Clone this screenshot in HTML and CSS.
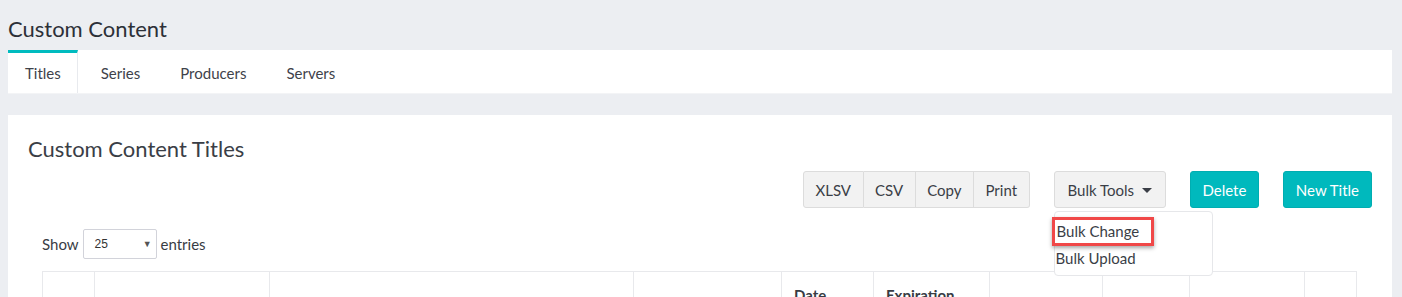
FILE: index.html
```html
<!DOCTYPE html>
<html>
  <head>
    <meta charset="utf-8">
    <title>Custom Content</title>
    <link rel="stylesheet" href="styles.css">
  </head>
  <body>
    <div class="page">
      <h1 class="page-title">Custom Content</h1>
      <nav class="tabs">
        <a class="tab active">Titles</a>
        <a class="tab">Series</a>
        <a class="tab">Producers</a>
        <a class="tab">Servers</a>
      </nav>
      <div class="tabs-gap"></div>
      <section class="card">
        <h2 class="card-title">Custom Content Titles</h2>
        <div class="toolbar">
          <div class="btn-group">
            <button type="button" class="btn">XLSV</button>
            <button type="button" class="btn">CSV</button>
            <button type="button" class="btn">Copy</button>
            <button type="button" class="btn">Print</button>
          </div>
          <div class="dropdown">
            <button type="button" class="btn btn-single">Bulk Tools <span class="caret"></span></button>
            <ul class="dropdown-menu">
              <li class="dropdown-item"><span class="highlight">Bulk Change</span></li>
              <li class="dropdown-item">Bulk Upload</li>
            </ul>
          </div>
          <button type="button" class="btn btn-teal btn-delete">Delete</button>
          <button type="button" class="btn btn-teal">New Title</button>
        </div>
        <div class="table-wrap">
          <div class="length">
            Show
            <div class="select"><span>25</span><span class="arrow">&#9660;</span></div>
            entries
          </div>
          <table class="grid">
            <colgroup>
              <col style="width:52px">
              <col style="width:175px">
              <col style="width:364px">
              <col style="width:148px">
              <col style="width:92px">
              <col style="width:116px">
              <col style="width:113px">
              <col style="width:87px">
              <col style="width:115px">
              <col style="width:52px">
            </colgroup>
            <thead>
              <tr>
                <th></th>
                <th></th>
                <th></th>
                <th></th>
                <th>Date Added</th>
                <th>Expiration Date</th>
                <th></th>
                <th></th>
                <th></th>
                <th></th>
              </tr>
            </thead>
          </table>
        </div>
      </section>
    </div>
  </body>
</html>
```

FILE: styles.css
```css
* {
  margin: 0;
  padding: 0;
  box-sizing: border-box;
}

body {
  background-color: #eceef2;
  color: #383c44;
  font-family: Lato, "Liberation Sans", sans-serif;
  overflow: hidden;
}

.page {
  padding: 0 10px 0 8px;
}

.page-title {
  font-size: 22px;
  font-weight: 400;
  line-height: 50px;
  height: 50px;
  padding-top: 4px;
  color: #2c3038;
}

.tabs {
  background-color: white;
  display: flex;
  height: 44px;
  border-bottom: 1px solid #f3f4f6;
}

.tab {
  font-size: 15px;
  line-height: 41px;
  padding: 0 17px 0 17px;
  margin-right: 6px;
  color: #3e424a;
  border-top: 3px solid transparent;
}

.tab.active {
  border-top-color: #00bbbf;
  border-right: 1px solid #e8eaee;
  padding-right: 16px;
}

.tabs-gap {
  height: 21px;
}

.card {
  background-color: white;
  height: 200px;
  padding: 18px 20px 0 20px;
}

.card-title {
  font-size: 22px;
  font-weight: 400;
  line-height: 32px;
  color: #3a3e46;
}

.toolbar {
  display: flex;
  justify-content: flex-end;
  gap: 24px;
  margin-top: 6px;
  height: 37px;
}

.btn-group {
  display: flex;
}

.btn {
  font-family: inherit;
  font-size: 15px;
  height: 37px;
  padding: 0 11.5px;
  background-color: #f2f2f2;
  border: 1px solid #dcdcdc;
  color: #3a3e46;
}

.btn-group .btn {
  border-radius: 0;
  border-left-width: 0;
}

.btn-group .btn:first-child {
  border-left-width: 1px;
  border-radius: 3px 0 0 3px;
}

.btn-group .btn:last-child {
  border-radius: 0 3px 3px 0;
}

.btn-single {
  border-radius: 3px;
  padding: 0 13px;
}

.caret {
  display: inline-block;
  width: 0;
  height: 0;
  margin-left: 4px;
  vertical-align: 3px;
  border-left: 5px solid transparent;
  border-right: 5px solid transparent;
  border-top: 5px solid #3a3e46;
}

.btn-teal {
  background-color: #00b9bd;
  border-color: #00adb1;
  color: white;
  border-radius: 3px;
  padding: 0 12px;
}

.btn-teal.btn-delete {
  padding: 0 11.5px;
}

.dropdown {
  position: relative;
}

.dropdown-menu {
  position: absolute;
  top: 40px;
  left: 0;
  width: 159px;
  height: 65px;
  background-color: white;
  border: 1px solid #e6e7ea;
  border-radius: 4px;
  list-style-type: none;
  padding-top: 5px;
  z-index: 2;
}

.dropdown-item {
  font-size: 15px;
  line-height: 24px;
  padding-left: 1px;
  color: #3a3e46;
}

.highlight {
  display: inline-block;
  margin-left: -4px;
  padding: 1px 12px 1px 2px;
  line-height: 21px;
  border: 3px solid #f04848;
  box-shadow: 0 2px 4px rgba(0, 0, 0, 0.35);
}

.table-wrap {
  padding: 0 15px 0 14px;
  margin-top: 21px;
}

.length {
  display: flex;
  align-items: center;
  font-size: 15px;
  height: 30px;
  gap: 4px;
}

.select {
  width: 74px;
  height: 30px;
  border: 1px solid #d2d3da;
  border-radius: 2px;
  display: flex;
  align-items: center;
  justify-content: space-between;
  padding: 0 4px 0 11px;
  font-size: 12px;
  font-family: "Liberation Sans", sans-serif;
  color: #333;
}

.arrow {
  font-size: 9px;
  color: #555;
}

.grid {
  margin-top: 12px;
  width: 1314px;
  border-collapse: collapse;
  table-layout: fixed;
}

.grid th {
  border: 1px solid #e8e9ec;
  height: 60px;
  vertical-align: top;
  text-align: left;
  font-size: 15px;
  font-weight: 700;
  line-height: 19px;
  padding: 14px 12px 0 12px;
}
```
